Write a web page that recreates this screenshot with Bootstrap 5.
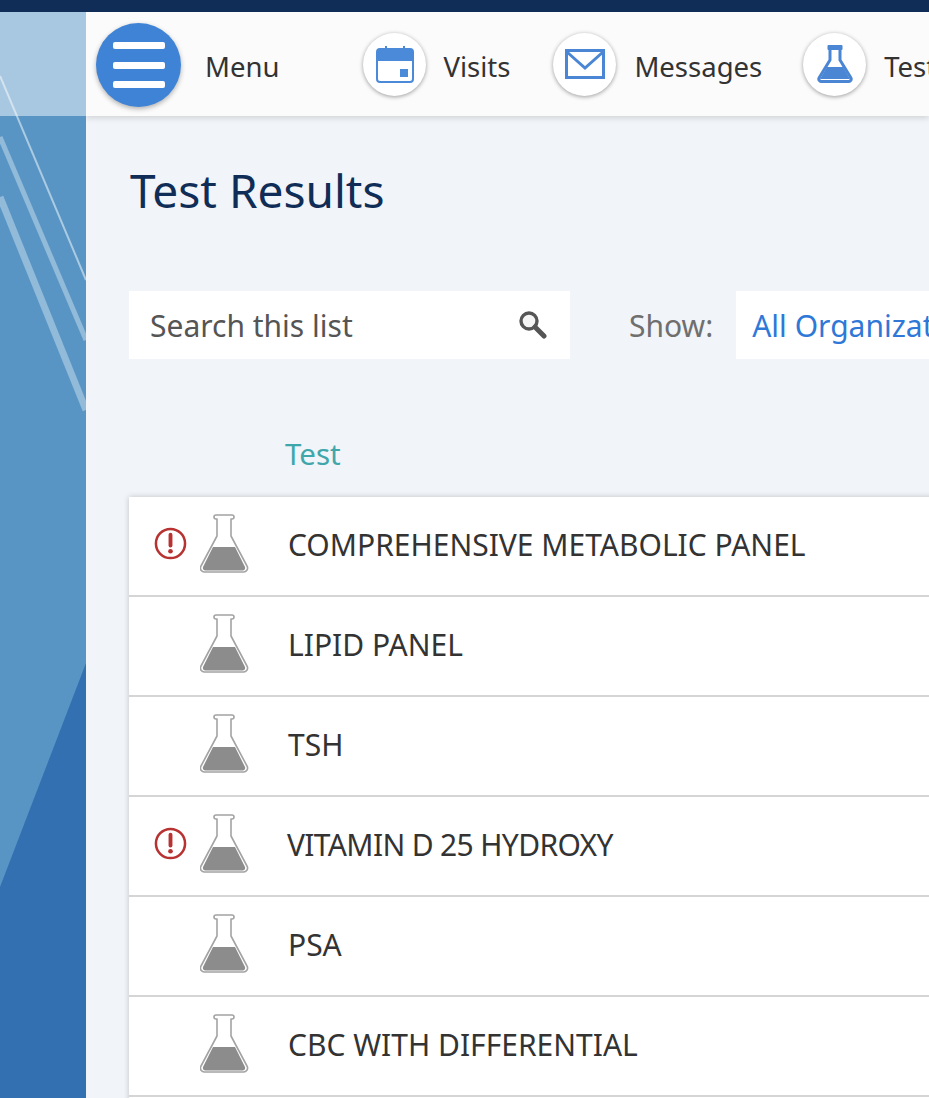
<!doctype html>
<html lang="en"><head><meta charset="utf-8"><title>Test Results</title>
<link href="https://cdn.jsdelivr.net/npm/bootstrap@5.3.0/dist/css/bootstrap.min.css" rel="stylesheet">
<style>
html,body{height:1098px;overflow:hidden}
body{font-family:"Noto Sans","Open Sans",sans-serif;background:#0f2d56;color:#333}
.topstrip{height:12px;background:#0f2d56}
.shell{height:1086px}
.sidebar{width:86px;flex:none;position:relative;background:#5995c4;overflow:hidden}
.sidebar svg{position:absolute;left:0;top:0}
.sidecap{position:absolute;left:0;top:0;width:86px;height:104px;background:rgba(255,255,255,.48)}
.mainpane{flex:1;min-width:0;background:#f1f4f8;overflow:hidden}
.navstrip{height:104px;background:#fbfbfc;box-shadow:0 2px 6px rgba(0,0,0,.14);white-space:nowrap;position:relative}
.menuball{width:85px;height:84px;border-radius:50%;background:#3f83d6;box-shadow:0 2px 5px rgba(0,0,0,.3);margin-left:10px;flex:none;margin-top:2px;gap:12.5px}
.menuball span{display:block;width:52px;height:7px;border-radius:2px;background:#fff}
.navlabel{font-size:27.5px;color:#333;line-height:1;padding-top:5px}
.navball{width:63px;height:63px;border-radius:50%;background:#fff;box-shadow:0 1px 4px rgba(0,0,0,.38);flex:none}
.pagehead{font-size:46px;color:#0f2d56;font-weight:400;line-height:1;margin:0}
.headwrap{padding:51px 0 0 44px}
.filters{margin:78px 0 0 43px}
.searchbox{width:441px;height:68px;background:#fff;padding:0 22px 0 21px;flex:none}
.searchbox span{font-size:30px;color:#555}
.showlbl{font-size:30px;color:#6f6f6f;margin-left:59px;margin-right:23px;flex:none}
.orgbox{height:68px;background:#fff;padding:0 16px;flex:none;font-size:30px;color:#2f78d8;white-space:nowrap}
.colhead{font-size:29.5px;color:#3fa7ab;margin:75px 0 0 199px;line-height:40px;height:63px}
.resultlist{margin:0 0 0 43px;border-radius:0;box-shadow:0 0 6px rgba(0,0,0,.2);width:900px;background:#fff;height:610px}
.resultlist .list-group-item{height:100px;flex:none;padding:0 0 4px;border:0;border-bottom:2px solid #d5d5d5;background:#fff;color:#333;font-size:30px}
.alertslot{width:71px;flex:none;padding-left:25px;line-height:0;margin-bottom:1px}
.flaskslot{width:88px;flex:none;line-height:0}
.rowname{white-space:nowrap}
.tightrow{letter-spacing:-.65px;margin-left:-1px}
</style></head><body>
<div class="topstrip"></div>
<div class="shell d-flex">
<aside class="sidebar" aria-hidden="true">
<svg width="86" height="1086" viewBox="0 0 86 1086">
<path d="M86 651 L0 875 V1086 H86Z" fill="#3270b2"/>
<path d="M0 64 L86 268" stroke="#b4d0e6" stroke-opacity=".9" stroke-width="2" fill="none"/>
<path d="M0 125 L86 328" stroke="#a0c3df" stroke-opacity=".8" stroke-width="5" fill="none"/>
<path d="M0 185 L86 398" stroke="#a0c3df" stroke-opacity=".8" stroke-width="7" fill="none"/>
</svg>
<div class="sidecap"></div>
</aside>
<main class="mainpane">
<nav class="navstrip d-flex align-items-center">
<div class="menuball d-flex flex-column justify-content-center align-items-center"><span></span><span></span><span></span></div>
<span class="navlabel ms-4">Menu</span>
<span class="navball d-flex align-items-center justify-content-center" style="margin-left:84px"><svg width="38" height="37" viewBox="0 0 38 37"><rect x="1" y="3" width="36" height="33" rx="3" fill="#fff" stroke="#4a8ad8" stroke-width="2"/><path d="M1 6a3 3 0 0 1 3-3h30a3 3 0 0 1 3 3v9H1z" fill="#4a8ad8"/><rect x="9" y="0" width="2" height="5" fill="#4a8ad8"/><rect x="27" y="0" width="2" height="5" fill="#4a8ad8"/><rect x="24" y="23" width="8" height="8" fill="#4a8ad8"/></svg></span>
<span class="navlabel" style="margin-left:17px">Visits</span>
<span class="navball d-flex align-items-center justify-content-center" style="margin-left:43px"><svg width="40" height="31" viewBox="0 0 40 31"><rect x="1.5" y="1.500" width="37" height="27" fill="#fff" stroke="#4a86d4" stroke-width="3"/><path d="M2 3 L20 19 L38 3" fill="none" stroke="#4a86d4" stroke-width="3"/></svg></span>
<span class="navlabel" style="margin-left:18px">Messages</span>
<span class="navball d-flex align-items-center justify-content-center" style="margin-left:41px"><svg width="36" height="38" viewBox="0 0 36 38"><path d="M13 2h10v13l11 18a2.500 2.500 0 0 1-2.500 3.500H4.500A2.500 2.500 0 0 1 2 33l11-18z" fill="#fff" stroke="#4a86d4" stroke-width="3" stroke-linejoin="round"/><rect x="10.500" y="0" width="15" height="5" rx="1" fill="#4a86d4"/><path d="M10 22h16l7 12H3z" fill="#4a86d4"/></svg></span>
<span class="navlabel" style="margin-left:18px">Test Results</span>
</nav>
<div class="headwrap"><h1 class="pagehead">Test Results</h1></div>
<div class="filters d-flex align-items-center">
<div class="searchbox d-flex align-items-center justify-content-between"><span>Search this list</span>
<svg width="30" height="28" viewBox="1 1 30 28"><circle cx="12" cy="11" r="8" fill="#f4f4f4" stroke="#555" stroke-width="3.400"/><path d="M18 17 L27 26" stroke="#555" stroke-width="5" stroke-linecap="round"/></svg></div>
<span class="showlbl">Show:</span>
<div class="orgbox d-flex align-items-center">All Organizations</div>
</div>
<div class="colhead">Test</div>
<div class="list-group resultlist">
<div class="list-group-item d-flex align-items-center"><span class="alertslot"><svg width="33" height="33" viewBox="0 0 34 34"><use href="#alertmark"/></svg></span><span class="flaskslot"><svg width="50" height="60" viewBox="0 0 50 60"><use href="#flask"/></svg></span><span class="rowname">COMPREHENSIVE METABOLIC PANEL</span></div>
<div class="list-group-item d-flex align-items-center"><span class="alertslot"></span><span class="flaskslot"><svg width="50" height="60" viewBox="0 0 50 60"><use href="#flask"/></svg></span><span class="rowname">LIPID PANEL</span></div>
<div class="list-group-item d-flex align-items-center"><span class="alertslot"></span><span class="flaskslot"><svg width="50" height="60" viewBox="0 0 50 60"><use href="#flask"/></svg></span><span class="rowname">TSH</span></div>
<div class="list-group-item d-flex align-items-center"><span class="alertslot"><svg width="33" height="33" viewBox="0 0 34 34"><use href="#alertmark"/></svg></span><span class="flaskslot"><svg width="50" height="60" viewBox="0 0 50 60"><use href="#flask"/></svg></span><span class="rowname tightrow">VITAMIN D 25 HYDROXY</span></div>
<div class="list-group-item d-flex align-items-center"><span class="alertslot"></span><span class="flaskslot"><svg width="50" height="60" viewBox="0 0 50 60"><use href="#flask"/></svg></span><span class="rowname">PSA</span></div>
<div class="list-group-item d-flex align-items-center"><span class="alertslot"></span><span class="flaskslot"><svg width="50" height="60" viewBox="0 0 50 60"><use href="#flask"/></svg></span><span class="rowname">CBC WITH DIFFERENTIAL</span></div>
</div>
</main>
</div>
<svg width="0" height="0" class="d-block" aria-hidden="true"><defs>
<g id="alertmark"><circle cx="17" cy="17" r="15" fill="none" stroke="#b83232" stroke-width="2.600"/><path d="M17 8v11" stroke="#b83232" stroke-width="4" stroke-linecap="round"/><circle cx="17" cy="25" r="2.400" fill="#b83232"/></g>
<g id="flask"><path d="M16 1h16a1.500 1.500 0 0 1 0 4h-1v17l16 30a4 4 0 0 1-4 6H5a4 4 0 0 1-4-6l16-30V5h-1a1.500 1.500 0 0 1 0-4z" fill="#fff" stroke="#a3a3a3" stroke-width="1.600" stroke-linejoin="round"/><path d="M13 33h22l10 20a2.600 2.600 0 0 1-2.500 3.500H5.500A2.600 2.600 0 0 1 3 53z" fill="#8c8c8c"/></g>
</defs></svg>
</body></html>
